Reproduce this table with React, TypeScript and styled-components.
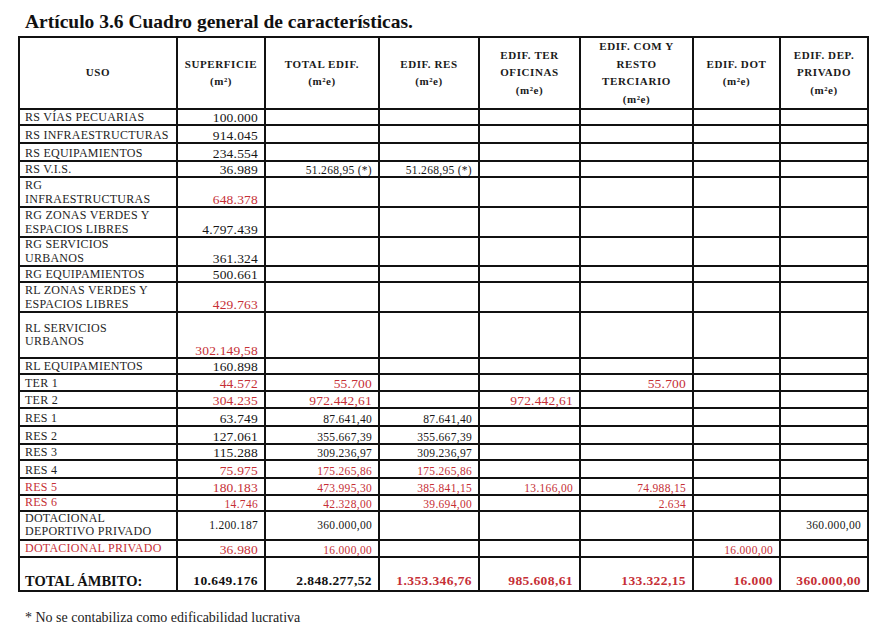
import React from "react";
import styled, { createGlobalStyle } from "styled-components";

const RED = "#c62f36";
const INK = "#161616";

const Global = createGlobalStyle`
  html, body { margin: 0; padding: 0; background: #ffffff; }
  body { font-family: "Liberation Serif", "Times New Roman", serif; color: ${INK}; }
`;

const Page = styled.div`
  width: 880px;
  height: 640px;
  box-sizing: border-box;
  padding: 12px 0 0 18px;
  display: flex;
  flex-direction: column;
`;

const Title = styled.h1`
  margin: 0 0 4px 7px;
  font-size: 19.5px;
  line-height: 20px;
  font-weight: bold;
  color: #111;
`;

const Table = styled.table`
  border-collapse: collapse;
  table-layout: fixed;
  width: 849px;
`;

const HeadCell = styled.th`
  border: 2px solid #111;
  padding: 0 2px;
  font-size: 11px;
  letter-spacing: 0.6px;
  line-height: 17.5px;
  font-weight: bold;
  text-align: center;
  vertical-align: middle;
  color: #1a1a1a;
`;

const Row = styled.tr<{ $h: number }>`
  height: ${(p) => p.$h}px;
`;

const Label = styled.td<{ $red?: boolean; $valign?: string }>`
  border: 2px solid #111;
  padding: 0 4px 0 5px;
  font-size: 12px;
  letter-spacing: 0.25px;
  line-height: 13.5px;
  color: ${(p) => (p.$red ? RED : "#1e1e1e")};
  vertical-align: ${(p) => p.$valign || "bottom"};
  white-space: nowrap;
  overflow: hidden;
`;

const Val = styled.td<{ $red?: boolean; $lg?: boolean; $valign?: string }>`
  border: 2px solid #111;
  padding: 0 6px 0 2px;
  text-align: right;
  font-size: ${(p) => (p.$lg ? "13.5px" : "11.5px")};
  letter-spacing: ${(p) => (p.$lg ? "0.2px" : "0.3px")};
  line-height: ${(p) => (p.$lg ? "13px" : "12px")};
  color: ${(p) => (p.$red ? RED : INK)};
  vertical-align: ${(p) => p.$valign || "bottom"};
  white-space: nowrap;
`;

const TotalLabel = styled.td`
  border: 2px solid #111;
  padding: 0 4px 1px 5px;
  font-size: 14.5px;
  font-weight: bold;
  line-height: 16px;
  vertical-align: bottom;
  color: #111;
  white-space: nowrap;
`;

const TotalVal = styled.td<{ $red?: boolean }>`
  border: 2px solid #111;
  padding: 0 6px 1px 2px;
  text-align: right;
  font-size: 13.5px;
  letter-spacing: 0.4px;
  font-weight: bold;
  line-height: 16px;
  vertical-align: bottom;
  color: ${(p) => (p.$red ? RED : "#111")};
  white-space: nowrap;
`;

const Footnote = styled.p`
  margin: 18px 0 0 7px;
  font-size: 14px;
  line-height: 16px;
  color: #222;
`;

type C = { t: string; red?: boolean; lg?: boolean } | null;
type R = {
  label: React.ReactNode;
  red?: boolean;
  h: number;
  lv?: string;
  vv?: string;
  cells: C[];
};

const widths = [158, 88, 114, 100, 101, 113, 87, 88];

const rows: R[] = [
  { label: "RS VÍAS PECUARIAS", h: 16, cells: [{ t: "100.000", lg: true }] },
  { label: "RS INFRAESTRUCTURAS", h: 18, cells: [{ t: "914.045", lg: true }] },
  { label: "RS EQUIPAMIENTOS", h: 18, cells: [{ t: "234.554", lg: true }] },
  {
    label: "RS V.I.S.",
    h: 16,
    cells: [{ t: "36.989", lg: true }, { t: "51.268,95 (*)" }, { t: "51.268,95 (*)" }],
  },
  {
    label: (
      <>
        RG
        <br />
        INFRAESTRUCTURAS
      </>
    ),
    h: 30,
    cells: [{ t: "648.378", lg: true, red: true }],
  },
  {
    label: (
      <>
        RG ZONAS VERDES Y
        <br />
        ESPACIOS LIBRES
      </>
    ),
    h: 30,
    cells: [{ t: "4.797.439", lg: true }],
  },
  {
    label: (
      <>
        RG SERVICIOS
        <br />
        URBANOS
      </>
    ),
    h: 29,
    cells: [{ t: "361.324", lg: true }],
  },
  { label: "RG EQUIPAMIENTOS", h: 16, cells: [{ t: "500.661", lg: true }] },
  {
    label: (
      <>
        RL ZONAS VERDES Y
        <br />
        ESPACIOS LIBRES
      </>
    ),
    h: 30,
    cells: [{ t: "429.763", lg: true, red: true }],
  },
  {
    label: (
      <>
        RL SERVICIOS
        <br />
        URBANOS
      </>
    ),
    h: 46,
    lv: "middle",
    cells: [{ t: "302.149,58", lg: true, red: true }],
  },
  { label: "RL EQUIPAMIENTOS", h: 16, cells: [{ t: "160.898", lg: true }] },
  {
    label: "TER 1",
    h: 17,
    cells: [
      { t: "44.572", lg: true, red: true },
      { t: "55.700", lg: true, red: true },
      null,
      null,
      { t: "55.700", lg: true, red: true },
    ],
  },
  {
    label: "TER 2",
    h: 17,
    cells: [
      { t: "304.235", lg: true, red: true },
      { t: "972.442,61", lg: true, red: true },
      null,
      { t: "972.442,61", lg: true, red: true },
    ],
  },
  {
    label: "RES 1",
    h: 18,
    cells: [{ t: "63.749", lg: true }, { t: "87.641,40" }, { t: "87.641,40" }],
  },
  {
    label: "RES 2",
    h: 18,
    cells: [{ t: "127.061", lg: true }, { t: "355.667,39" }, { t: "355.667,39" }],
  },
  {
    label: "RES 3",
    h: 16,
    cells: [{ t: "115.288", lg: true }, { t: "309.236,97" }, { t: "309.236,97" }],
  },
  {
    label: "RES 4",
    h: 18,
    cells: [
      { t: "75.975", lg: true, red: true },
      { t: "175.265,86", red: true },
      { t: "175.265,86", red: true },
    ],
  },
  {
    label: "RES 5",
    red: true,
    h: 17,
    cells: [
      { t: "180.183", lg: true, red: true },
      { t: "473.995,30", red: true },
      { t: "385.841,15", red: true },
      { t: "13.166,00", red: true },
      { t: "74.988,15", red: true },
    ],
  },
  {
    label: "RES 6",
    red: true,
    h: 15,
    cells: [
      { t: "14.746", red: true },
      { t: "42.328,00", red: true },
      { t: "39.694,00", red: true },
      null,
      { t: "2.634", red: true },
    ],
  },
  {
    label: (
      <>
        DOTACIONAL
        <br />
        DEPORTIVO PRIVADO
      </>
    ),
    h: 29,
    vv: "middle",
    cells: [{ t: "1.200.187" }, { t: "360.000,00" }, null, null, null, null, { t: "360.000,00" }],
  },
  {
    label: "DOTACIONAL PRIVADO",
    red: true,
    h: 17,
    cells: [
      { t: "36.980", lg: true, red: true },
      { t: "16.000,00", red: true },
      null,
      null,
      null,
      { t: "16.000,00", red: true },
    ],
  },
];

const totals: { t: string; red?: boolean }[] = [
  { t: "10.649.176" },
  { t: "2.848.277,52" },
  { t: "1.353.346,76", red: true },
  { t: "985.608,61", red: true },
  { t: "133.322,15", red: true },
  { t: "16.000", red: true },
  { t: "360.000,00", red: true },
];

const headers: React.ReactNode[] = [
  "USO",
  <>
    SUPERFICIE
    <br />
    (m²)
  </>,
  <>
    TOTAL EDIF.
    <br />
    (m²e)
  </>,
  <>
    EDIF. RES
    <br />
    (m²e)
  </>,
  <>
    EDIF. TER
    <br />
    OFICINAS
    <br />
    (m²e)
  </>,
  <>
    EDIF. COM Y
    <br />
    RESTO
    <br />
    TERCIARIO
    <br />
    (m²e)
  </>,
  <>
    EDIF. DOT
    <br />
    (m²e)
  </>,
  <>
    EDIF. DEP.
    <br />
    PRIVADO
    <br />
    (m²e)
  </>,
];

export default function App() {
  return (
    <Page>
      <Global />
      <Title>Artículo 3.6 Cuadro general de características.</Title>
      <Table>
        <colgroup>
          {widths.map((w, i) => (
            <col key={i} style={{ width: w }} />
          ))}
        </colgroup>
        <thead>
          <Row $h={72}>
            {headers.map((h, i) => (
              <HeadCell key={i}>{h}</HeadCell>
            ))}
          </Row>
        </thead>
        <tbody>
          {rows.map((r, i) => (
            <Row key={i} $h={r.h}>
              <Label $red={r.red} $valign={r.lv}>
                {r.label}
              </Label>
              {Array.from({ length: 7 }).map((_, j) => {
                const c = r.cells[j];
                return (
                  <Val key={j} $red={c?.red} $lg={c?.lg} $valign={r.vv}>
                    {c ? c.t : ""}
                  </Val>
                );
              })}
            </Row>
          ))}
          <Row $h={34}>
            <TotalLabel>TOTAL ÁMBITO:</TotalLabel>
            {totals.map((t, j) => (
              <TotalVal key={j} $red={t.red}>
                {t.t}
              </TotalVal>
            ))}
          </Row>
        </tbody>
      </Table>
      <Footnote>* No se contabiliza como edificabilidad lucrativa</Footnote>
    </Page>
  );
}
